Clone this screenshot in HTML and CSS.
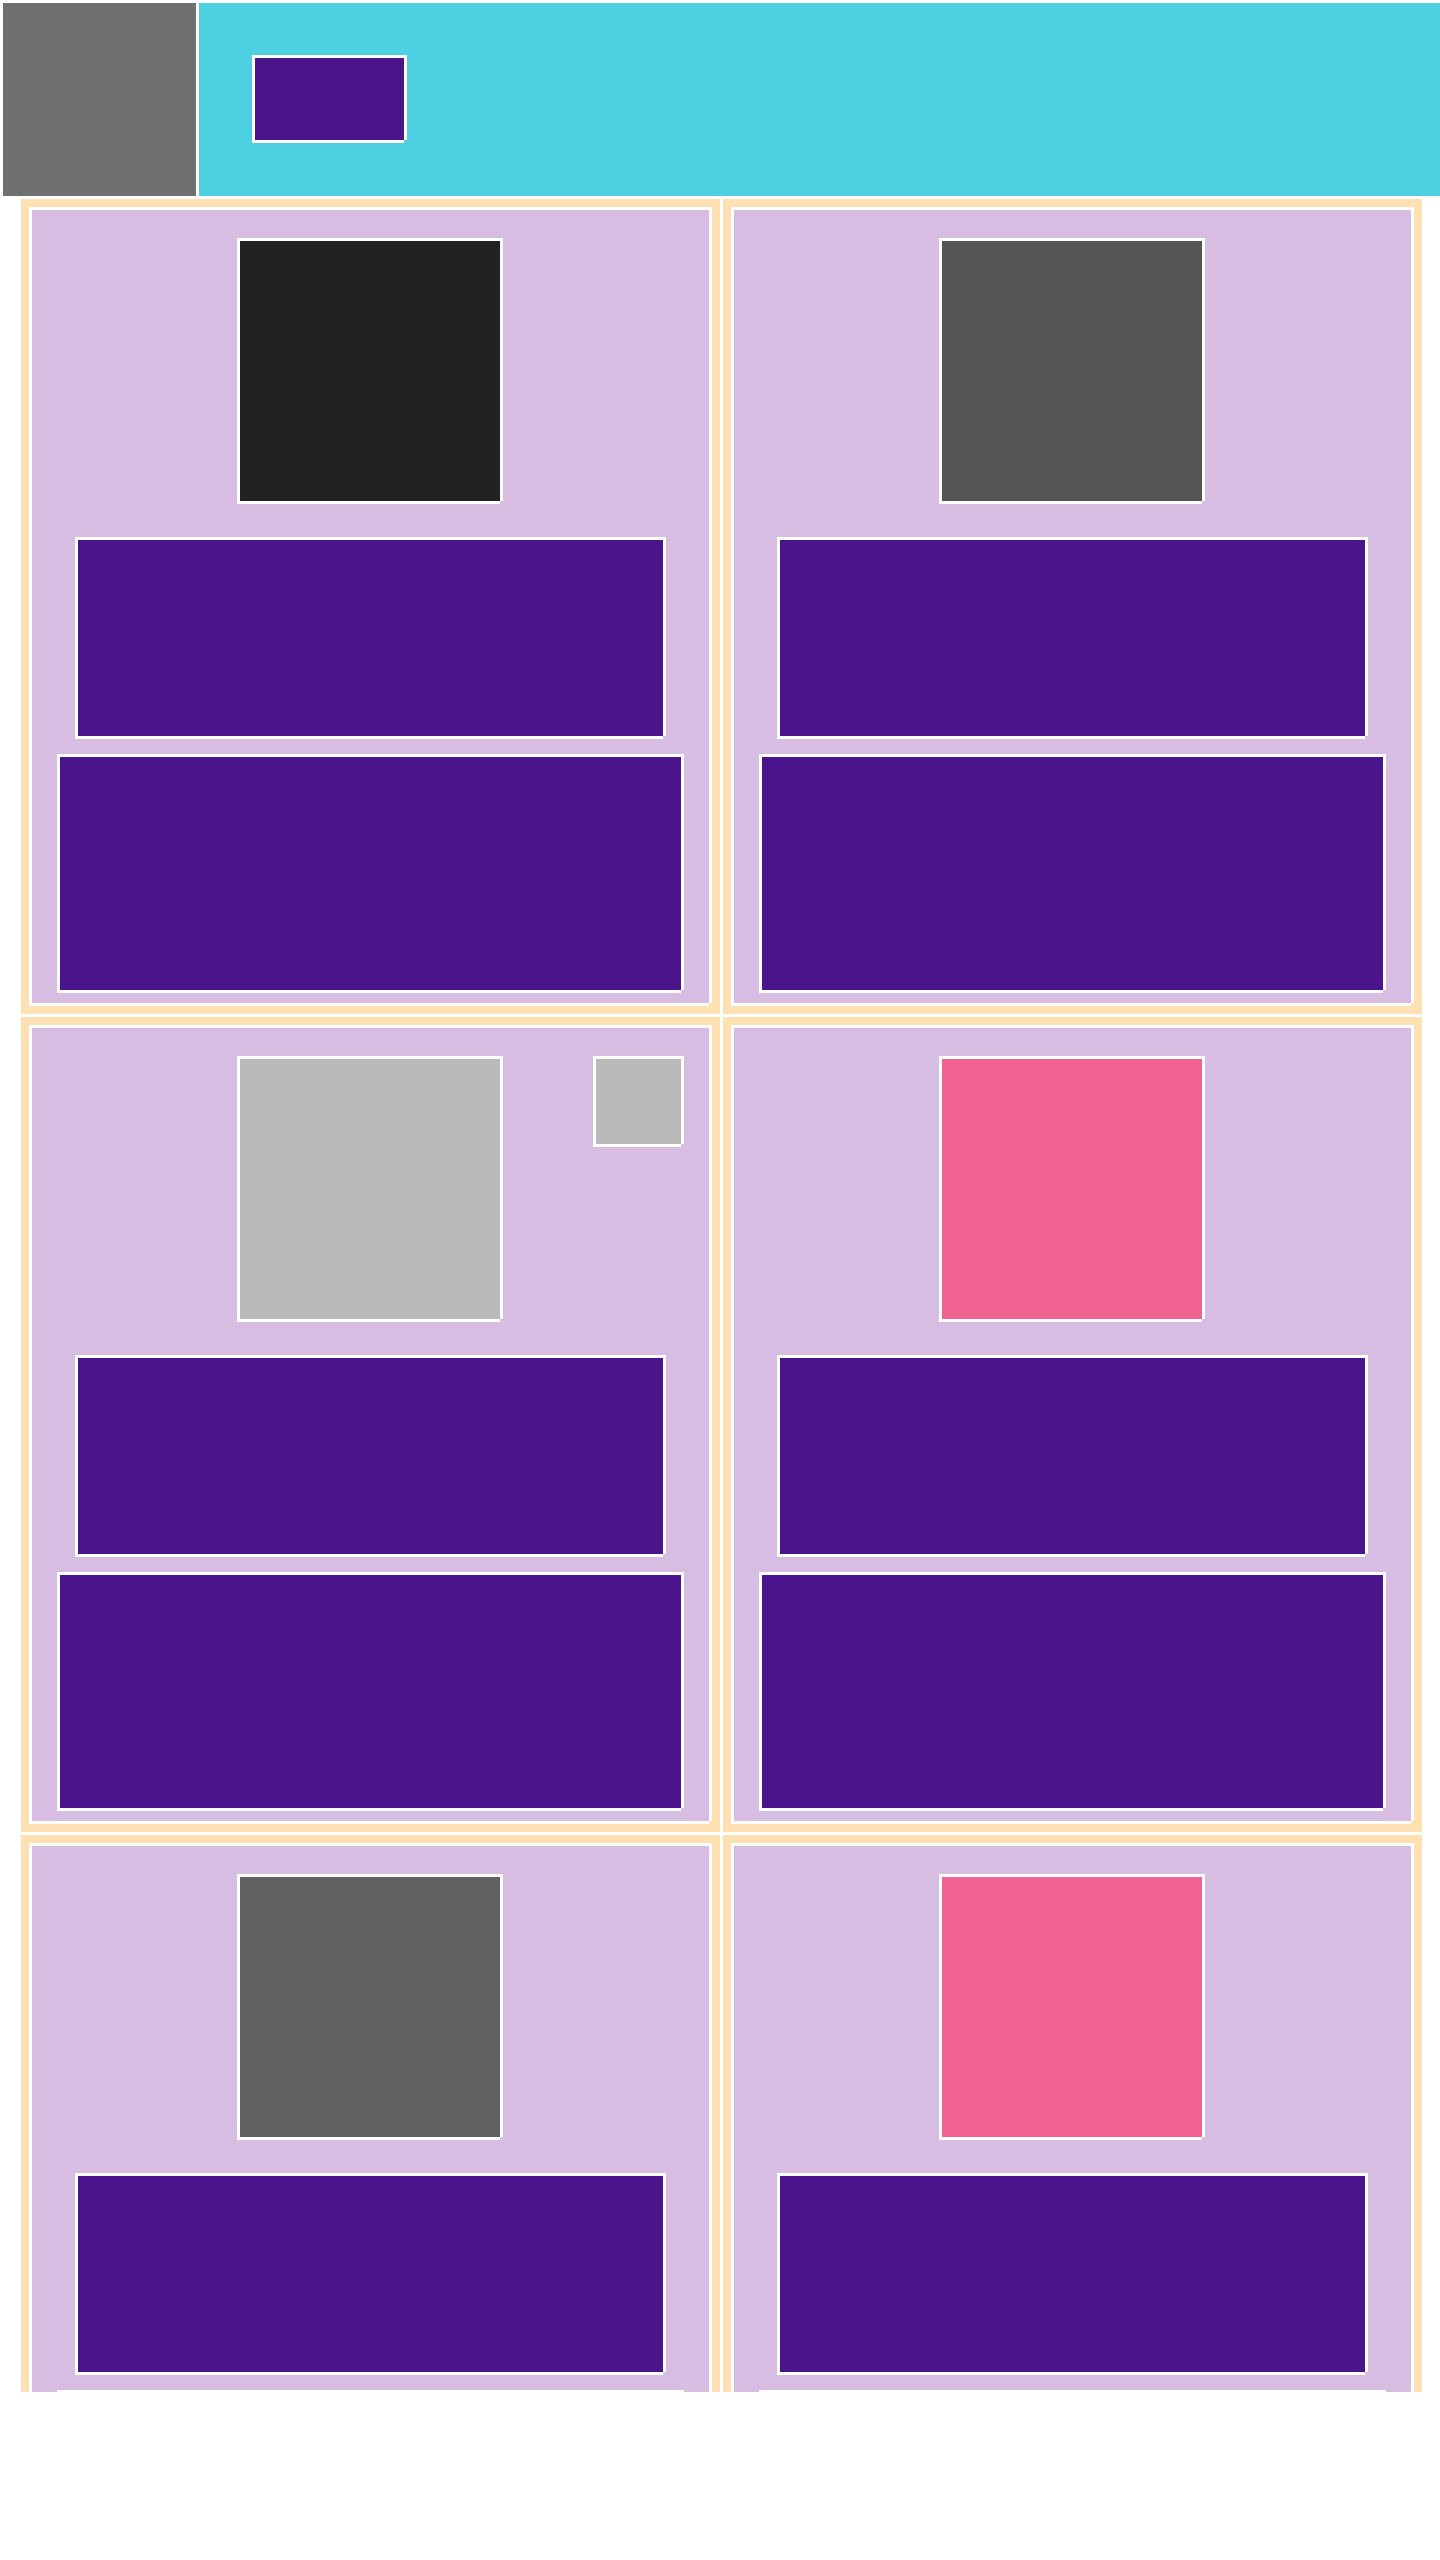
FILE: index.html
```html
<!DOCTYPE html>
<html lang="en">
<head>
<meta charset="utf-8">
<title>Layout</title>
<link rel="stylesheet" href="styles.css">
</head>
<body>
<div class="page">
  <header class="topbar">
    <div class="box logo"></div>
    <div class="box bar">
      <div class="box btn"></div>
    </div>
  </header>
  <main class="grid">
    <div class="box cell">
      <div class="box card">
        <div class="box thumb c-dark"></div>
        <div class="box panel-a"></div>
        <div class="box panel-b"></div>
      </div>
    </div>
    <div class="box cell">
      <div class="box card">
        <div class="box thumb c-mid"></div>
        <div class="box panel-a"></div>
        <div class="box panel-b"></div>
      </div>
    </div>
    <div class="box cell">
      <div class="box card">
        <div class="box thumb c-light"></div>
        <div class="box badge c-light"></div>
        <div class="box panel-a"></div>
        <div class="box panel-b"></div>
      </div>
    </div>
    <div class="box cell">
      <div class="box card">
        <div class="box thumb c-pink"></div>
        <div class="box panel-a"></div>
        <div class="box panel-b"></div>
      </div>
    </div>
    <div class="box cell">
      <div class="box card">
        <div class="box thumb c-grey"></div>
        <div class="box panel-a"></div>
        <div class="box panel-b"></div>
      </div>
    </div>
    <div class="box cell">
      <div class="box card">
        <div class="box thumb c-pink"></div>
        <div class="box panel-a"></div>
        <div class="box panel-b"></div>
      </div>
    </div>
  </main>
</div>
</body>
</html>
```

FILE: styles.css
```css
* { box-sizing: border-box; }

html, body {
  margin: 0;
  padding: 0;
  background: #ffffff;
  font-family: "Liberation Sans", Arial, sans-serif;
}

.page {
  height: 2392px;
  overflow: hidden;
}

.box {
  border-left: 3px solid #ffffff;
  border-top: 3px solid #ffffff;
  box-shadow: 3px 0 0 #ffffff, 0 3px 0 #ffffff;
}

/* header */
.topbar {
  display: flex;
  height: 196px;
}

.logo {
  flex: 0 0 196px;
  height: 196px;
  background: #6f6f6f;
}

.bar {
  flex: 1 1 auto;
  height: 196px;
  background: #4dd0e1;
  display: flex;
  align-items: flex-start;
  padding: 52px 0 0 53px;
}

.btn {
  width: 152px;
  height: 85px;
  background: #4a148c;
}

/* grid */
.grid {
  display: grid;
  grid-template-columns: 702px 702px;
  grid-auto-rows: 818px;
  margin-left: 18px;
}

.cell {
  background: #ffe0b2;
  padding: 8px;
}

.card {
  position: relative;
  width: 680px;
  height: 796px;
  background: #d7bde2;
  display: flex;
  flex-direction: column;
  align-items: flex-start;
}

.thumb {
  width: 263px;
  height: 263px;
  margin: 28px 0 0 205px;
  flex: 0 0 auto;
}

.panel-a {
  width: 588px;
  height: 199px;
  margin: 36px 0 0 43px;
  background: #4a148c;
  flex: 0 0 auto;
}

.panel-b {
  width: 624px;
  height: 236px;
  margin: 18px 0 0 25px;
  background: #4a148c;
  flex: 0 0 auto;
}

.badge {
  position: absolute;
  top: 28px;
  right: 28px;
  width: 88px;
  height: 88px;
}

.c-dark { background: #222222; }
.c-mid { background: #555555; }
.c-light { background: #bababa; }
.c-pink { background: #f06292; }
.c-grey { background: #616161; }
```
